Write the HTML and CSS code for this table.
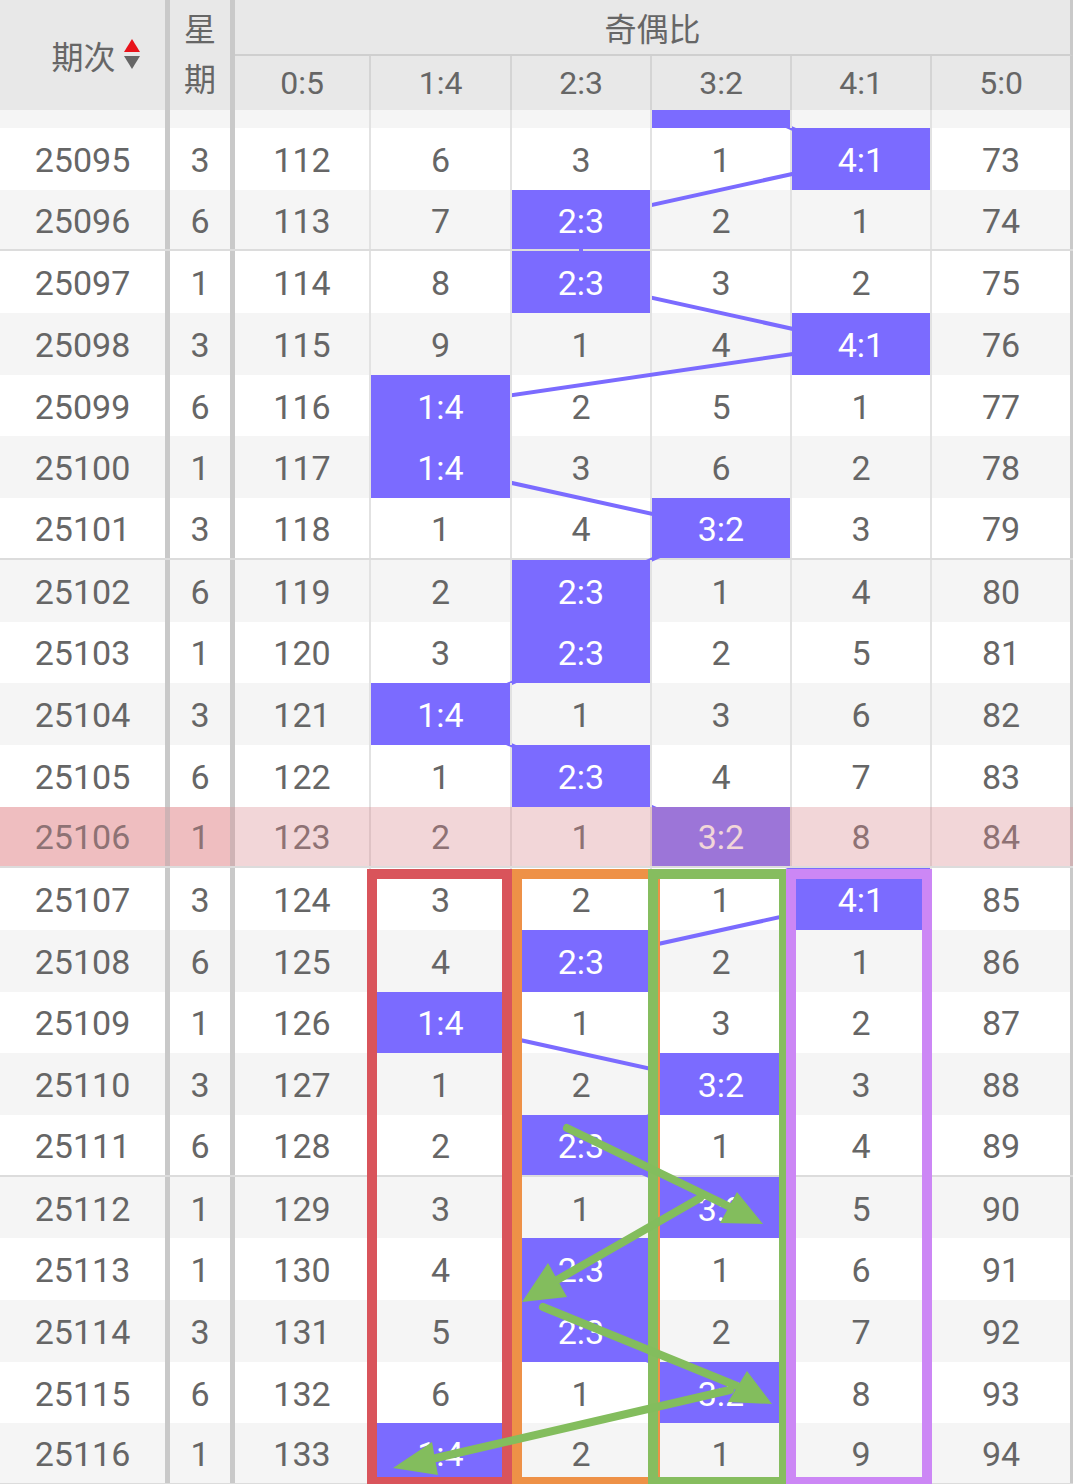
FILE: index.html
```html
<!DOCTYPE html>
<html lang="zh">
<head>
<meta charset="utf-8">
<title>奇偶比走势</title>
<link rel="stylesheet" href="styles.css">
</head>
<body>
<div class="sheet">
  <div class="head">
    <div class="h-issue"><span>期次</span><svg class="sort" width="18" height="34" viewBox="0 0 18 34"><polygon points="9,1 17,14 1,14" fill="#e8131b"/><polygon points="1,18 17,18 9,31" fill="#666"/></svg></div>
    <div class="h-week">星期</div>
    <div class="h-group">奇偶比</div>
    <div class="h-sub">0:5</div>
    <div class="h-sub">1:4</div>
    <div class="h-sub">2:3</div>
    <div class="h-sub">3:2</div>
    <div class="h-sub">4:1</div>
    <div class="h-sub last">5:0</div>
  </div>
  <div class="body">
    <div class="rows">
      <div class="row alt stub"><div class="c issue"></div><div class="c week"></div><div class="c"></div><div class="c"></div><div class="c"></div><div class="c hit"></div><div class="c"></div><div class="c last"></div></div>
      <div class="row"><div class="c issue">25095</div><div class="c week">3</div><div class="c">112</div><div class="c">6</div><div class="c">3</div><div class="c">1</div><div class="c hit">4:1</div><div class="c last">73</div></div>
      <div class="row alt sep"><div class="c issue">25096</div><div class="c week">6</div><div class="c">113</div><div class="c">7</div><div class="c hit">2:3</div><div class="c">2</div><div class="c">1</div><div class="c last">74</div></div>
      <div class="row"><div class="c issue">25097</div><div class="c week">1</div><div class="c">114</div><div class="c">8</div><div class="c hit">2:3</div><div class="c">3</div><div class="c">2</div><div class="c last">75</div></div>
      <div class="row alt"><div class="c issue">25098</div><div class="c week">3</div><div class="c">115</div><div class="c">9</div><div class="c">1</div><div class="c">4</div><div class="c hit">4:1</div><div class="c last">76</div></div>
      <div class="row"><div class="c issue">25099</div><div class="c week">6</div><div class="c">116</div><div class="c hit">1:4</div><div class="c">2</div><div class="c">5</div><div class="c">1</div><div class="c last">77</div></div>
      <div class="row alt"><div class="c issue">25100</div><div class="c week">1</div><div class="c">117</div><div class="c hit">1:4</div><div class="c">3</div><div class="c">6</div><div class="c">2</div><div class="c last">78</div></div>
      <div class="row sep"><div class="c issue">25101</div><div class="c week">3</div><div class="c">118</div><div class="c">1</div><div class="c">4</div><div class="c hit">3:2</div><div class="c">3</div><div class="c last">79</div></div>
      <div class="row alt"><div class="c issue">25102</div><div class="c week">6</div><div class="c">119</div><div class="c">2</div><div class="c hit">2:3</div><div class="c">1</div><div class="c">4</div><div class="c last">80</div></div>
      <div class="row"><div class="c issue">25103</div><div class="c week">1</div><div class="c">120</div><div class="c">3</div><div class="c hit">2:3</div><div class="c">2</div><div class="c">5</div><div class="c last">81</div></div>
      <div class="row alt"><div class="c issue">25104</div><div class="c week">3</div><div class="c">121</div><div class="c hit">1:4</div><div class="c">1</div><div class="c">3</div><div class="c">6</div><div class="c last">82</div></div>
      <div class="row"><div class="c issue">25105</div><div class="c week">6</div><div class="c">122</div><div class="c">1</div><div class="c hit">2:3</div><div class="c">4</div><div class="c">7</div><div class="c last">83</div></div>
      <div class="row now sep"><div class="c issue">25106</div><div class="c week">1</div><div class="c">123</div><div class="c">2</div><div class="c">1</div><div class="c hit">3:2</div><div class="c">8</div><div class="c last">84</div></div>
      <div class="row"><div class="c issue">25107</div><div class="c week">3</div><div class="c">124</div><div class="c">3</div><div class="c">2</div><div class="c">1</div><div class="c hit">4:1</div><div class="c last">85</div></div>
      <div class="row alt"><div class="c issue">25108</div><div class="c week">6</div><div class="c">125</div><div class="c">4</div><div class="c hit">2:3</div><div class="c">2</div><div class="c">1</div><div class="c last">86</div></div>
      <div class="row"><div class="c issue">25109</div><div class="c week">1</div><div class="c">126</div><div class="c hit">1:4</div><div class="c">1</div><div class="c">3</div><div class="c">2</div><div class="c last">87</div></div>
      <div class="row alt"><div class="c issue">25110</div><div class="c week">3</div><div class="c">127</div><div class="c">1</div><div class="c">2</div><div class="c hit">3:2</div><div class="c">3</div><div class="c last">88</div></div>
      <div class="row sep"><div class="c issue">25111</div><div class="c week">6</div><div class="c">128</div><div class="c">2</div><div class="c hit">2:3</div><div class="c">1</div><div class="c">4</div><div class="c last">89</div></div>
      <div class="row alt"><div class="c issue">25112</div><div class="c week">1</div><div class="c">129</div><div class="c">3</div><div class="c">1</div><div class="c hit">3:2</div><div class="c">5</div><div class="c last">90</div></div>
      <div class="row"><div class="c issue">25113</div><div class="c week">1</div><div class="c">130</div><div class="c">4</div><div class="c hit">2:3</div><div class="c">1</div><div class="c">6</div><div class="c last">91</div></div>
      <div class="row alt"><div class="c issue">25114</div><div class="c week">3</div><div class="c">131</div><div class="c">5</div><div class="c hit">2:3</div><div class="c">2</div><div class="c">7</div><div class="c last">92</div></div>
      <div class="row"><div class="c issue">25115</div><div class="c week">6</div><div class="c">132</div><div class="c">6</div><div class="c">1</div><div class="c hit">3:2</div><div class="c">8</div><div class="c last">93</div></div>
      <div class="row alt sep"><div class="c issue">25116</div><div class="c week">1</div><div class="c">133</div><div class="c hit">1:4</div><div class="c">2</div><div class="c">1</div><div class="c">9</div><div class="c last">94</div></div>
      <svg class="lines" width="1073" height="1376" viewBox="0 0 1073 1376">
        <polyline fill="none" stroke="#7b6bff" stroke-width="4" points="721,-12.85 861,48.85 581,110.55 581,172.25 861,233.95 441,295.65 441,357.35 721,419.05 581,480.75 581,542.45 441,604.15 581,665.85 721,727.55 861,789.25 581,850.95 441,912.65 721,974.35 581,1036.05 721,1097.75 581,1159.45 581,1221.15 721,1282.85 441,1344.55"/>
      </svg>
    </div>
  </div>
  <svg class="marks" width="1076" height="1484" viewBox="0 0 1076 1484">
    <g fill="none" stroke-width="10">
      <rect x="372" y="874" width="135" height="608" stroke="#d9545b"/>
      <rect x="517" y="874" width="138" height="608" stroke="#ee9147"/>
      <rect x="653" y="874" width="131" height="608" stroke="#86bd5f"/>
      <rect x="791" y="874" width="136" height="608" stroke="#cc87f5"/>
    </g>
    <g stroke="#83bd5d" stroke-width="8" stroke-linecap="round" fill="none">
      <line x1="567" y1="1128" x2="730" y2="1207"/>
      <line x1="700" y1="1198" x2="557" y2="1280"/>
      <line x1="543" y1="1307" x2="737" y2="1386"/>
      <line x1="730" y1="1390" x2="436" y2="1458"/>
    </g>
    <g fill="#83bd5d">
      <polygon points="763,1224 737,1192 720,1223"/>
      <polygon points="522,1302 548,1263 567,1297"/>
      <polygon points="772,1404 747,1371 728,1402"/>
      <polygon points="393,1468 432,1442 438,1475"/>
    </g>
  </svg>
</div>
</body>
</html>
```
FILE: styles.css
```css
* {
  box-sizing: border-box;
  margin: 0;
  padding: 0;
}

body {
  margin: 0;
  background: #fff;
  font-family: Roboto, "Noto Sans CJK SC", sans-serif;
  color: #666;
}

.sheet {
  position: relative;
  width: 1076px;
  height: 1484px;
  overflow: hidden;
  background: #fff;
}

.head {
  display: grid;
  grid-template-columns: 170px 65px 136px 141px 140px 140px 140px 141px;
  grid-template-rows: 56px 54px;
  width: 1073px;
  background: #e8e8e8;
  font-size: 32px;
}

.h-issue {
  grid-row: 1 / 3;
  display: flex;
  align-items: center;
  justify-content: center;
  gap: 7px;
  padding-left: 27px;
  border-right: 5px solid #c9c9c9;
}

.sort {
  display: block;
}

.h-week {
  grid-row: 1 / 3;
  display: flex;
  align-items: center;
  justify-content: center;
  text-align: center;
  padding: 0 12px;
  line-height: 50px;
  border-right: 5px solid #c9c9c9;
}

.h-group {
  grid-column: 3 / 9;
  display: flex;
  align-items: center;
  justify-content: center;
  border-bottom: 2px solid #cfcfcf;
  border-right: 3px solid #c9c9c9;
}

.h-sub {
  display: flex;
  align-items: center;
  justify-content: center;
  border-right: 2px solid #d4d4d4;
}

.h-sub.last {
  border-right: 3px solid #c9c9c9;
}

.body {
  width: 1073px;
  height: 1374px;
  overflow: hidden;
}

.rows {
  position: relative;
}

.row {
  display: grid;
  grid-template-columns: 170px 65px 136px 141px 140px 140px 140px 141px;
  height: 61.7px;
  background: #fff;
  font-size: 34px;
}

.row.stub {
  height: 18px;
}

.row.alt {
  background: #f5f5f5;
}

.row.sep {
  border-bottom: 2px solid #dcdcdc;
}

.c {
  display: flex;
  align-items: center;
  justify-content: center;
  padding-top: 2px;
  border-right: 2px solid #e2e2e2;
}

.c.issue,
.c.week {
  border-right: 5px solid #c9c9c9;
}

.c.last {
  border-right: 3px solid #c9c9c9;
}

.c.hit {
  position: relative;
  z-index: 2;
  background: #7b6bff;
  color: #fff;
}

.lines {
  position: absolute;
  left: 0;
  top: 0;
  z-index: 1;
}

.row.now {
  position: relative;
  z-index: 3;
  background: #fff;
}

.row.now .issue,
.row.now .week {
  background: #fadbdb;
}

.row.now::after {
  content: "";
  position: absolute;
  inset: 0;
  z-index: 4;
  background: rgba(218, 138, 144, 0.35);
}

.marks {
  position: absolute;
  left: 0;
  top: 0;
  z-index: 10;
}
```
